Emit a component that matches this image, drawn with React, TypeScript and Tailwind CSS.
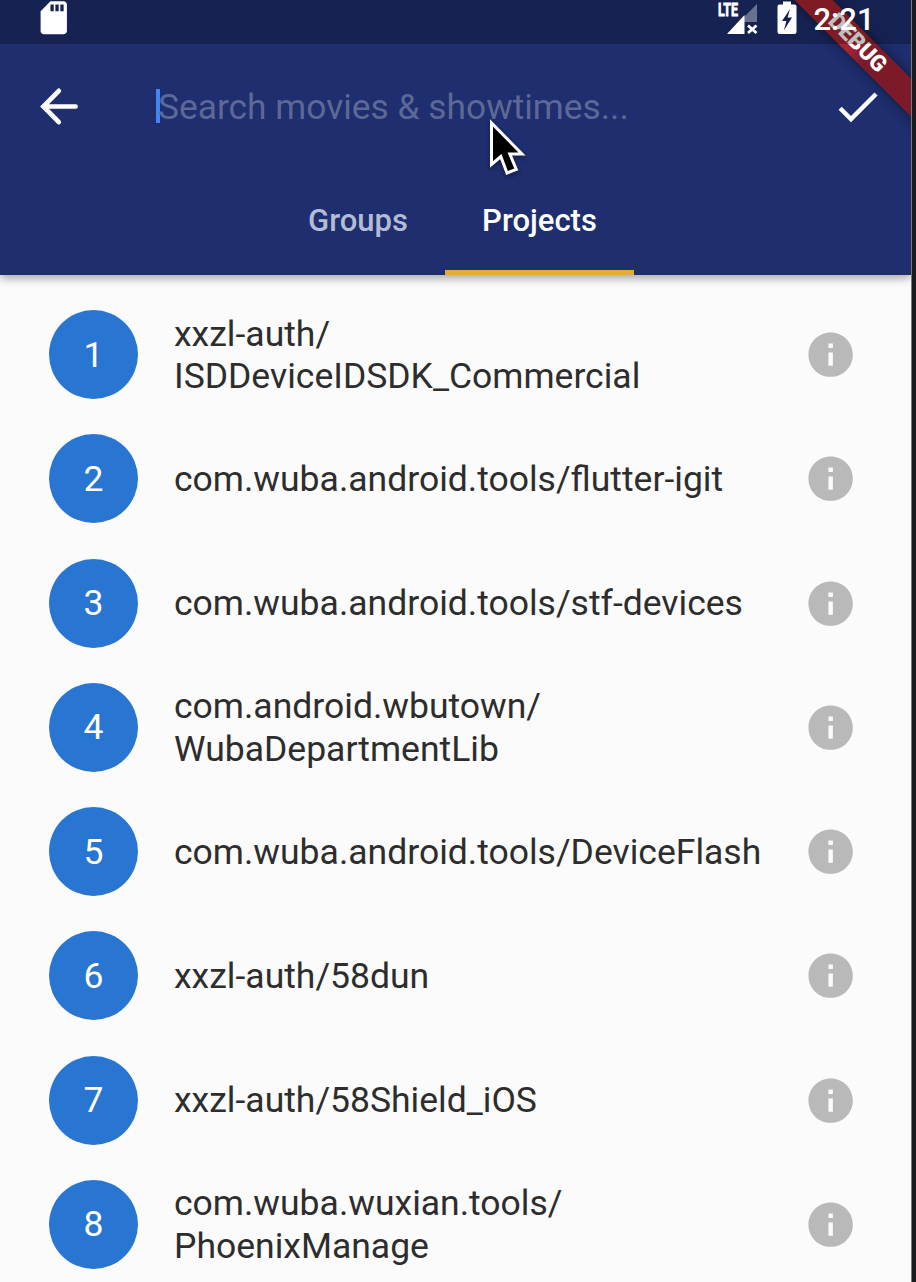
const projects: string[][] = [
  ['xxzl-auth/', 'ISDDeviceIDSDK_Commercial'],
  ['com.wuba.android.tools/flutter-igit'],
  ['com.wuba.android.tools/stf-devices'],
  ['com.android.wbutown/', 'WubaDepartmentLib'],
  ['com.wuba.android.tools/DeviceFlash'],
  ['xxzl-auth/58dun'],
  ['xxzl-auth/58Shield_iOS'],
  ['com.wuba.wuxian.tools/', 'PhoenixManage'],
];

function SdCardIcon() {
  return (
    <svg viewBox="0 0 24 24" className="ml-[34px] -mt-[2.5px] size-[39.5px] fill-white">
      <path d="M18 2h-8L4.02 8 4 20c0 1.1.9 2 2 2h12c1.1 0 2-.9 2-2V4c0-1.1-.9-2-2-2zm-6 6h-2V4h2v4zm3 0h-2V4h2v4zm3 0h-2V4h2v4z" />
    </svg>
  );
}

function SignalIcon() {
  return (
    <svg viewBox="0 0 42 36" className="h-9 w-[42px]">
      <path d="M40 4V22H27V17Z" fill="#68718f" />
      <path d="M27.5 15V34H10Z" fill="white" />
      <path d="M31 25.5l8.5 7.5M39.5 25.5l-8.5 7.5" stroke="white" strokeWidth="2.8" />
      <text x="1" y="16" fill="white" stroke="white" strokeWidth="0.8" fontSize="18.5" fontWeight="700" fontFamily="Roboto, sans-serif" textLength="20" lengthAdjust="spacingAndGlyphs">LTE</text>
    </svg>
  );
}

function BatteryIcon() {
  return (
    <svg viewBox="0 0 20 36" className="ml-[17.5px] h-9 w-5">
      <path fillRule="evenodd" fill="white" d="M6 1.5H14V4.5H17.5Q19.5 4.5 19.5 6.5V32Q19.5 34 17.5 34H2.5Q.5 34 .5 32V6.5Q.5 4.5 2.5 4.5H6ZM13 9L5 21H9.4L6.8 30.5L15 17.5H10.6Z" />
    </svg>
  );
}

function StatusBar() {
  return (
    <div className="relative z-20 flex h-11 items-start bg-black/25">
      <SdCardIcon />
      <div className="ml-auto flex h-9 w-[194px] items-start">
        <SignalIcon />
        <BatteryIcon />
        <span className="ml-[17px] mt-0.5 text-[31px] leading-[36px] font-medium text-white">2:21</span>
      </div>
    </div>
  );
}

function DebugBanner() {
  return (
    <div className="absolute top-0 right-0 z-10 size-[140px] overflow-hidden">
      <div className="absolute top-[35px] left-[-9px] flex h-[27px] w-[200px] rotate-45 items-center justify-center bg-linear-to-r from-[#a8242f] from-45% to-[#7c1a2a] to-55% pr-3.5 text-[22.6px] leading-none font-black text-white shadow-[0_0_12px_rgba(0,0,0,0.5)]">
        DEBUG
      </div>
    </div>
  );
}

function Pointer() {
  return (
    <svg viewBox="0 0 40 60" className="absolute top-[117px] left-[487px] z-10 h-[60px] w-10 drop-shadow-[0_2px_2px_rgba(0,0,0,0.4)]">
      <path d="M4.5 6V47.5L13.8 39.5L20 56L29.3 52.3L22.8 37H35Z" fill="black" stroke="white" strokeWidth="3" />
    </svg>
  );
}

function Header() {
  return (
    <header className="h-[274.5px] shrink-0 bg-[#1e2e6e] shadow-[0_3px_9px_rgba(0,0,0,0.36)]">
      <StatusBar />
      <div className="flex h-[124px] items-center">
        <svg viewBox="0 0 24 24" className="ml-[32.5px] size-[53px]">
          <path d="M19.3 12H5M11.7 4.9L4.7 12l7 7.1" fill="none" stroke="white" strokeWidth="2.1" strokeLinecap="round" strokeLinejoin="miter" />
        </svg>
        <div className="ml-[70.5px] h-[34px] w-1 shrink-0 bg-[#4285f4]" />
        <span className="-ml-0.5 mt-px text-[35.35px] leading-[42px] whitespace-nowrap text-[#5c6896]">Search movies &amp; showtimes...</span>
        <svg viewBox="0 0 24 24" className="mr-[27px] ml-auto size-[53.3px] translate-y-px fill-white">
          <path d="M9 16.17L4.83 12l-1.42 1.41L9 19 21 7l-1.41-1.41z" />
        </svg>
      </div>
      <nav className="flex h-[106.5px] justify-center pr-1.5 text-[31px] font-medium">
        <div className="flex w-[174px] justify-center pt-[35px] leading-[36px] text-[#b4bbd6]">Groups</div>
        <div className="flex w-[189px] justify-center border-b-5 border-[#e8a93c] pt-[35px] leading-[36px] text-white">Projects</div>
      </nav>
    </header>
  );
}

function ProjectRow({ index, lines }: { index: number; lines: string[] }) {
  return (
    <li className="flex h-[124.27px] shrink-0 items-center pr-[54px] pl-[49px]">
      <div className="flex size-[89px] shrink-0 items-center justify-center rounded-full bg-[#2975d2] pt-px text-[35.5px] text-white">{index}</div>
      <div className="ml-9 flex-1 pt-px text-[35.52px] leading-[42.5px] whitespace-nowrap text-[#2d2d2d]">
        {lines.map((line) => (
          <div key={line}>{line}</div>
        ))}
      </div>
      <svg viewBox="0 0 24 24" className="size-[53.3px] shrink-0 fill-[#b9b9b9]">
        <path d="M12 2C6.48 2 2 6.48 2 12s4.48 10 10 10 10-4.48 10-10S17.52 2 12 2zm1 15h-2v-6h2v6zm0-8h-2V7h2v2z" />
      </svg>
    </li>
  );
}

export default function App() {
  return (
    <div className="flex h-[1282px] w-[916px] overflow-hidden bg-[#191b1c] font-['Roboto',sans-serif]">
      <main className="relative flex w-[911px] flex-col overflow-hidden bg-[#fbfbfb]">
        <Header />
        <ul className="flex flex-col pt-[18px]">
          {projects.map((lines, i) => (
            <ProjectRow key={i} index={i + 1} lines={lines} />
          ))}
        </ul>
        <DebugBanner />
        <Pointer />
      </main>
      <div className="w-px bg-[#77797a]" />
    </div>
  );
}
